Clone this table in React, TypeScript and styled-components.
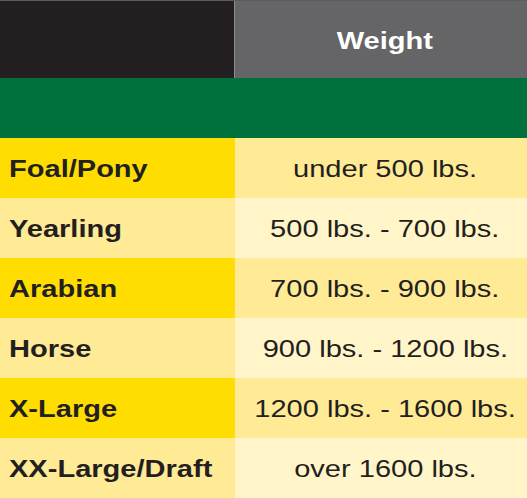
import React from "react";
import styled, { createGlobalStyle } from "styled-components";

const GlobalStyle = createGlobalStyle`
  html, body {
    margin: 0;
    padding: 0;
    background: #ffffff;
  }
  body {
    font-family: "Liberation Sans", Arial, sans-serif;
  }
`;

const Table = styled.div`
  width: 527px;
  display: grid;
  grid-template-columns: 235px 1fr;
  border-top: 1px solid #5c5b5d;
`;

const HeaderCell = styled.div<{ $dark?: boolean }>`
  height: 77px;
  box-sizing: border-box;
  background: ${({ $dark }) => ($dark ? "#231f20" : "#656567")};
  border-right: ${({ $dark }) => ($dark ? "1px solid #8c8b8d" : "none")};
  color: #ffffff;
  font-weight: 700;
  font-size: 24px;
  display: flex;
  align-items: center;
  justify-content: center;
  padding-left: 8px;
  padding-top: 2px;
`;

const GreenBand = styled.div`
  grid-column: 1 / -1;
  height: 60px;
  background: #00703c;
`;

const LabelCell = styled.div<{ $tone: "strong" | "mid" }>`
  height: 60px;
  box-sizing: border-box;
  background: ${({ $tone }) => ($tone === "strong" ? "#ffdd00" : "#ffea95")};
  color: #231f20;
  font-weight: 700;
  font-size: 24px;
  display: flex;
  align-items: center;
  padding-left: 9px;
  padding-top: 2px;
`;

const ValueCell = styled.div<{ $tone: "mid" | "light" }>`
  height: 60px;
  box-sizing: border-box;
  background: ${({ $tone }) => ($tone === "mid" ? "#ffea95" : "#fff5c8")};
  color: #231f20;
  font-size: 24px;
  display: flex;
  align-items: center;
  justify-content: center;
  padding-left: 8px;
  padding-top: 2px;
`;

// the source text is horizontally stretched
const Wide = styled.span<{ $origin?: string }>`
  display: inline-block;
  white-space: nowrap;
  transform: scaleX(1.21);
  transform-origin: ${({ $origin }) => $origin || "center"} center;
`;

const rows = [
  { label: "Foal/Pony", weight: "under 500 lbs." },
  { label: "Yearling", weight: "500 lbs. - 700 lbs." },
  { label: "Arabian", weight: "700 lbs. - 900 lbs." },
  { label: "Horse", weight: "900 lbs. - 1200 lbs." },
  { label: "X-Large", weight: "1200 lbs. - 1600 lbs." },
  { label: "XX-Large/Draft", weight: "over 1600 lbs." },
];

export default function App() {
  return (
    <>
      <GlobalStyle />
      <Table>
        <HeaderCell $dark />
        <HeaderCell>
          <Wide>Weight</Wide>
        </HeaderCell>
        <GreenBand />
        {rows.map((row, i) => {
          const odd = i % 2 === 0;
          return (
            <React.Fragment key={row.label}>
              <LabelCell $tone={odd ? "strong" : "mid"}>
                <Wide $origin="left">{row.label}</Wide>
              </LabelCell>
              <ValueCell $tone={odd ? "mid" : "light"}>
                <Wide>{row.weight}</Wide>
              </ValueCell>
            </React.Fragment>
          );
        })}
      </Table>
    </>
  );
}
